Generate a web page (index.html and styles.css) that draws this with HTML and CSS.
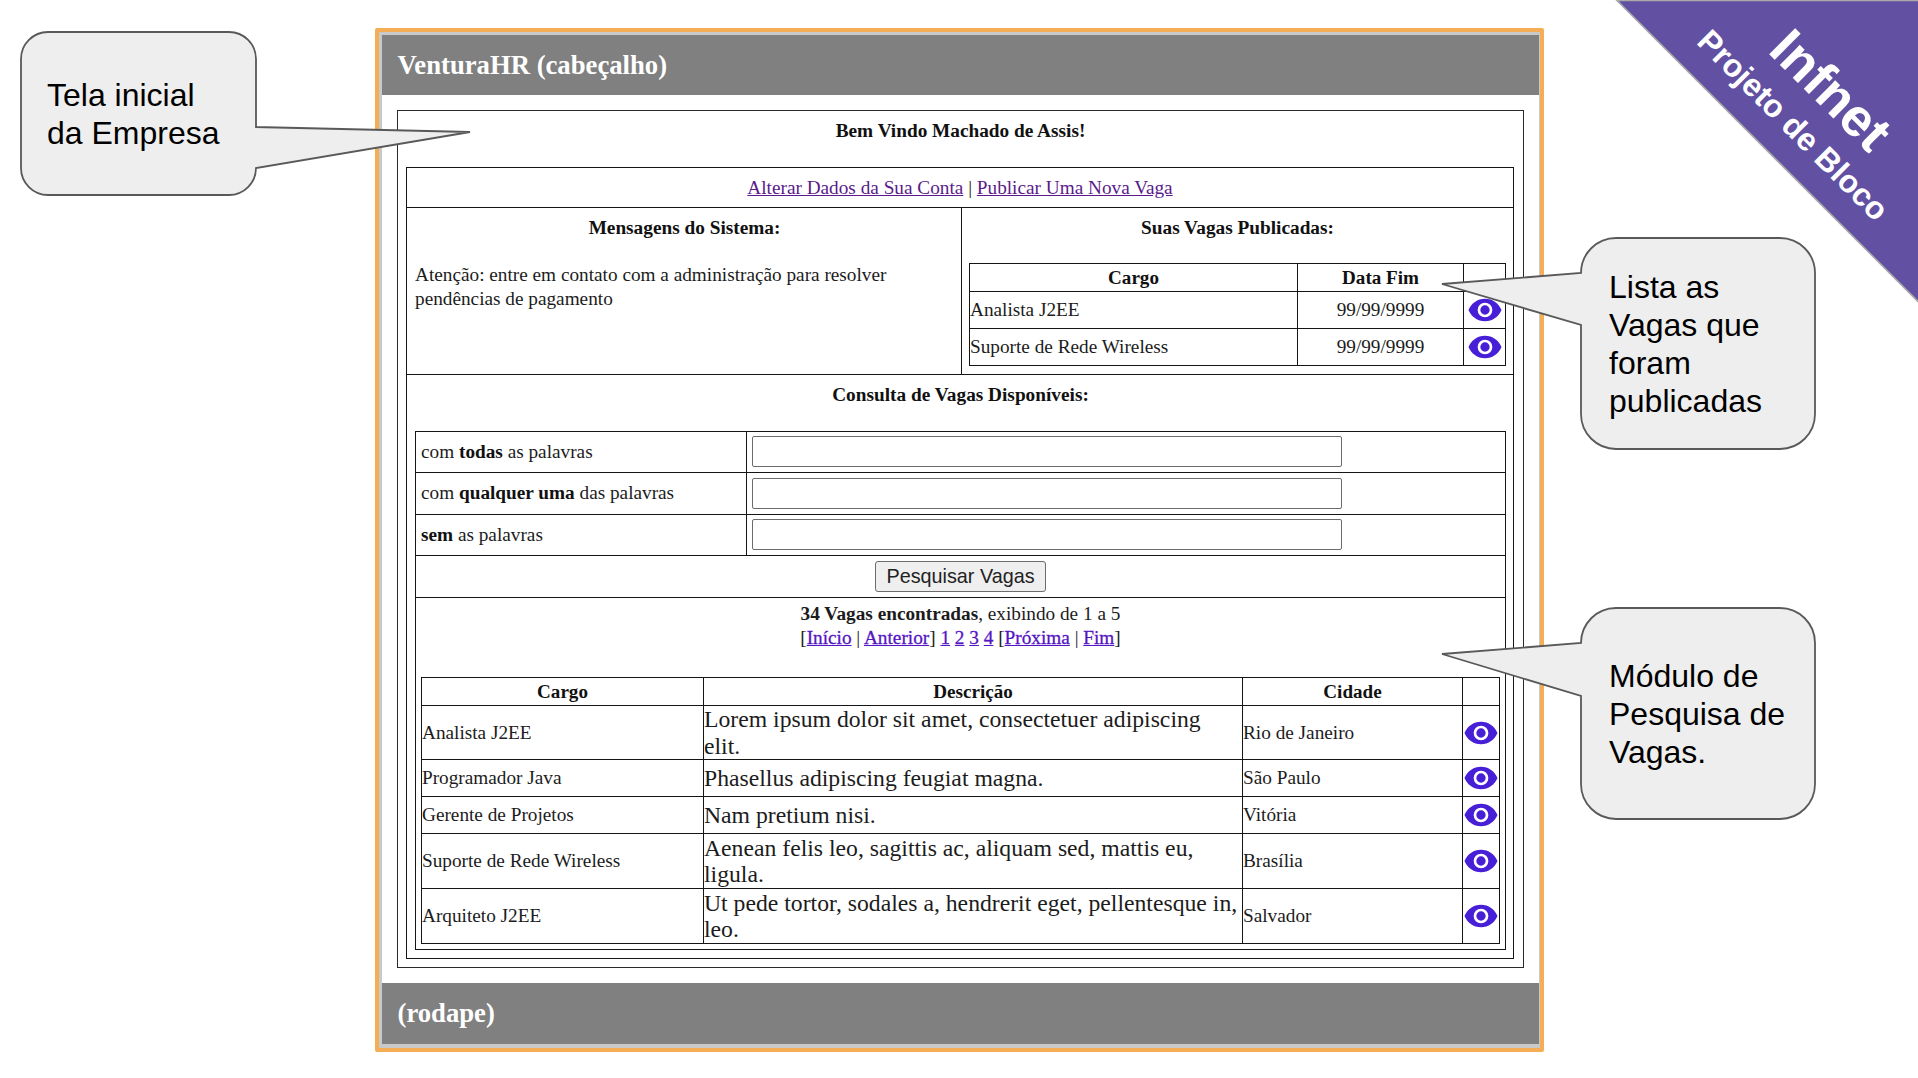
FILE: index.html
```html
<!DOCTYPE html>
<html lang="pt-BR">
<head>
<meta charset="utf-8">
<title>VenturaHR</title>
<link rel="stylesheet" href="styles.css">
</head>
<body>
<svg class="defs" width="0" height="0" aria-hidden="true">
  <symbol id="eye" viewBox="0 0 24 24">
    <path fill="#471fd6" fill-rule="evenodd" d="M12 4.5C7 4.5 2.73 7.61 1 12c1.73 4.39 6 7.5 11 7.5s9.27-3.11 11-7.5c-1.73-4.39-6-7.5-11-7.5zM12 16.9a4.9 4.9 0 1 1 0-9.8 4.9 4.9 0 0 1 0 9.8zm0-8a3.1 3.1 0 1 0 0 6.2 3.1 3.1 0 0 0 0-6.2z"/>
  </symbol>
</svg>

<main class="frame">
  <header class="bar">VenturaHR (cabeçalho)</header>
  <section class="outer">
    <h1 class="title">Bem Vindo Machado de Assis!</h1>
    <table class="grid main">
      <colgroup><col class="m1"><col class="m2"></colgroup>
      <tr class="r-links"><td colspan="2" class="center"><a class="visited" href="#">Alterar Dados da Sua Conta</a> | <a class="visited" href="#">Publicar Uma Nova Vaga</a></td></tr>
      <tr class="r-info">
        <td class="panel left">
          <h2 class="title">Mensagens do Sistema:</h2>
          <p class="message">Atenção: entre em contato com a administração para resolver<br>pendências de pagamento</p>
        </td>
        <td class="panel">
          <h2 class="title">Suas Vagas Publicadas:</h2>
          <table class="grid posted">
            <colgroup><col class="p1"><col class="p2"><col class="p3"></colgroup>
            <tr class="r-head"><th>Cargo</th><th>Data Fim</th><th></th></tr>
            <tr class="r-one"><td>Analista J2EE</td><td class="center">99/99/9999</td><td class="icon"><svg class="eye"><use href="#eye"/></svg></td></tr>
            <tr class="r-one"><td>Suporte de Rede Wireless</td><td class="center">99/99/9999</td><td class="icon"><svg class="eye"><use href="#eye"/></svg></td></tr>
          </table>
        </td>
      </tr>
      <tr class="r-search">
        <td colspan="2" class="panel left">
          <h2 class="title">Consulta de Vagas Disponíveis:</h2>
          <table class="grid search">
            <colgroup><col class="s1"><col class="s2"></colgroup>
            <tr class="r-field"><td class="label">com <b>todas</b> as palavras</td><td class="control"><input class="field" type="text"></td></tr>
            <tr class="r-field tall"><td class="label">com <b>qualquer uma</b> das palavras</td><td class="control"><input class="field" type="text"></td></tr>
            <tr class="r-field"><td class="label"><b>sem</b> as palavras</td><td class="control"><input class="field" type="text"></td></tr>
            <tr class="r-field tall"><td colspan="2" class="center"><button class="submit">Pesquisar Vagas</button></td></tr>
            <tr class="r-results">
              <td colspan="2" class="results-cell">
                <p class="pager"><b>34 Vagas encontradas</b>, exibindo de 1 a 5<br>[<a href="#">Início</a> | <a href="#">Anterior</a>] <a href="#">1</a> <a href="#">2</a> <a href="#">3</a> <a href="#">4</a> [<a href="#">Próxima</a> | <a href="#">Fim</a>]</p>
                <table class="grid results">
                  <colgroup><col class="c1"><col class="c2"><col class="c3"><col class="c4"></colgroup>
                  <tr class="r-head"><th>Cargo</th><th>Descrição</th><th>Cidade</th><th></th></tr>
                  <tr class="r-two first"><td>Analista J2EE</td><td class="desc">Lorem ipsum dolor sit amet, consectetuer adipiscing<br>elit.</td><td>Rio de Janeiro</td><td class="icon"><svg class="eye"><use href="#eye"/></svg></td></tr>
                  <tr class="r-one"><td>Programador Java</td><td class="desc">Phasellus adipiscing feugiat magna.</td><td>São Paulo</td><td class="icon"><svg class="eye"><use href="#eye"/></svg></td></tr>
                  <tr class="r-one"><td>Gerente de Projetos</td><td class="desc">Nam pretium nisi.</td><td>Vitória</td><td class="icon"><svg class="eye"><use href="#eye"/></svg></td></tr>
                  <tr class="r-two"><td>Suporte de Rede Wireless</td><td class="desc">Aenean felis leo, sagittis ac, aliquam sed, mattis eu,<br>ligula.</td><td>Brasília</td><td class="icon"><svg class="eye"><use href="#eye"/></svg></td></tr>
                  <tr class="r-two"><td>Arquiteto J2EE</td><td class="desc">Ut pede tortor, sodales a, hendrerit eget, pellentesque in,<br>leo.</td><td>Salvador</td><td class="icon"><svg class="eye"><use href="#eye"/></svg></td></tr>
                </table>
              </td>
            </tr>
          </table>
        </td>
      </tr>
    </table>
  </section>
  <footer class="bar">(rodape)</footer>
</main>

<aside class="callout home">
  <svg class="bubble" width="452" height="166"><path d="M28 1H209A27 27 0 0 1 236 28V96L450 101L236 137A27 27 0 0 1 209 164H28A27 27 0 0 1 1 137V28A27 27 0 0 1 28 1Z"/></svg>
  <p class="note">Tela inicial<br>da Empresa</p>
</aside>
<aside class="callout posted-note">
  <svg class="bubble" width="377" height="214"><path d="M176 1H340A35 35 0 0 1 375 36V177A35 35 0 0 1 340 212H176A35 35 0 0 1 141 177V88L2 47L141 36A35 35 0 0 1 176 1Z"/></svg>
  <p class="note">Lista as<br>Vagas que<br>foram<br>publicadas</p>
</aside>
<aside class="callout search-note">
  <svg class="bubble" width="377" height="214"><path d="M176 1H340A35 35 0 0 1 375 36V177A35 35 0 0 1 340 212H176A35 35 0 0 1 141 177V89L2 47L141 36A35 35 0 0 1 176 1Z"/></svg>
  <p class="note">Módulo de<br>Pesquisa de<br>Vagas.</p>
</aside>

<svg class="ribbon" width="304" height="306" viewBox="1614 0 304 306">
  <path d="M1617 .5H1920V303.500Z" fill="#6250a2" stroke="#a9a9a9" stroke-width="1.6"/>
  <text class="ribbon-name" transform="translate(1818 103) rotate(45)">Infnet</text>
  <text class="ribbon-sub" transform="translate(1785.500 133) rotate(45)">Projeto de Bloco</text>
</svg>
</body>
</html>
```
FILE: styles.css
```css
* { box-sizing: border-box; }

body {
  position: relative;
  width: 1918px;
  height: 1078px;
  margin: 0;
  overflow: hidden;
  background: #fff;
  color: #1c1c1c;
  font: 19.25px/24px "Liberation Serif", "Times New Roman", serif;
}

.defs { position: absolute; }

/* framed application window */
.frame {
  display: flex;
  flex-direction: column;
  width: 1169px;
  height: 1024px;
  margin: 28px 0 0 375px;
  padding: 3px 1px 5px 3px;
  border: 4px solid #f5ae56;
  border-radius: 2px;
  background: #c9c9c9;
}

.bar {
  flex: none;
  height: 61px;
  padding-left: 15.5px;
  background: #808080;
  color: #fff;
  font-size: 26.7px;
  font-weight: bold;
  line-height: 60px;
}

.frame > .outer {
  flex: 1;
  background: #fff;
  border: 1px solid #2a2a2a;
  outline: 15px solid #fff;
  margin: 14px 15px 15px 15px;
}

.outer { padding: 8px 8px 8px; }

.title {
  margin: 0;
  color: #111;
  font-size: 19.3px;
  font-weight: bold;
  line-height: 24px;
  text-align: center;
}

/* ruled tables: the dark background shows through the 1px spacing */
.grid {
  table-layout: fixed;
  border-collapse: separate;
  border-spacing: 1px;
  background: #151515;
}

.grid td,
.grid th {
  padding: 0;
  background: #fff;
  vertical-align: middle;
}

.grid th { color: #111; font-size: 19.1px; }
.grid .center { text-align: center; }

.main { width: 1108px; margin-top: 24px; }
.m1 { width: 554px; }
.m2 { width: 551px; }
.r-links { height: 39px; }
.r-info { height: 166px; }
.r-search { height: 583px; }

.grid .panel { padding: 8px 7px 0; vertical-align: top; }
.grid .panel.left { padding-left: 8px; }
.message { margin: 23px 0 0; }

.posted { width: 537px; margin-top: 23px; }
.p1 { width: 327px; }
.p2 { width: 165px; }
.p3 { width: 41px; }

.search { width: 1091px; margin-top: 24px; }
.s1 { width: 330px; }
.s2 { width: 758px; }
.r-field { height: 40px; }
.r-field.tall { height: 41px; }
.r-results { height: 351px; }

.grid .label { padding: 0 0 1px 5px; }
.grid .control { padding: 0 0 1px 5px; }
.label b { color: #111; }

.field {
  display: block;
  width: 590px;
  height: 31px;
  border: 1px solid #6c6c6c;
  border-radius: 2px;
  background: #fff;
}

.submit {
  display: block;
  width: 171px;
  height: 31px;
  margin: 0 auto;
  padding: 0;
  border: 1px solid #6c6c6c;
  border-radius: 3px;
  background: #efefef;
  color: #222;
  font: 19.8px/27px "Liberation Sans", Arial, sans-serif;
}

.grid .results-cell { padding: 4px 5px 0; vertical-align: top; }
.pager { margin: 0 0 27px; text-align: center; }
.results { width: 1079px; }
.c1 { width: 281px; }
.c2 { width: 538px; }
.c3 { width: 219px; }
.c4 { width: 36px; }

.r-head { height: 27px; }
.r-one { height: 36px; }
.r-two { height: 54px; }
.r-two.first { height: 53px; }

.grid .desc { font-size: 23.7px; line-height: 26.4px; white-space: nowrap; }
.eye { display: block; width: 36px; height: 36px; margin: 0 auto; }

a { color: #5416c4; text-decoration: underline; }
a.visited { color: #5a1a8b; }
.pager a { -webkit-text-stroke: .3px #5416c4; }

/* speech-bubble annotations */
.callout {
  position: absolute;
  color: #000;
  font: 32px/38px "Liberation Sans", Arial, sans-serif;
}
.bubble { display: block; fill: #eee; stroke: #595959; stroke-width: 1.8; }
.note { position: absolute; margin: 0; white-space: nowrap; }

.home { left: 20px; top: 31px; }
.home .note { left: 27px; top: 45px; }
.posted-note { left: 1440px; top: 237px; }
.posted-note .note { left: 169px; top: 31px; }
.search-note { left: 1440px; top: 607px; }
.search-note .note { left: 169px; top: 50px; }

/* corner ribbon */
.ribbon { position: absolute; top: 0; right: 0; }
.ribbon text {
  fill: #fff;
  font-family: "Liberation Sans", Arial, sans-serif;
  font-weight: bold;
  text-anchor: middle;
}
.ribbon-name { font-size: 53.3px; }
.ribbon-sub { font-size: 32px; }
```
